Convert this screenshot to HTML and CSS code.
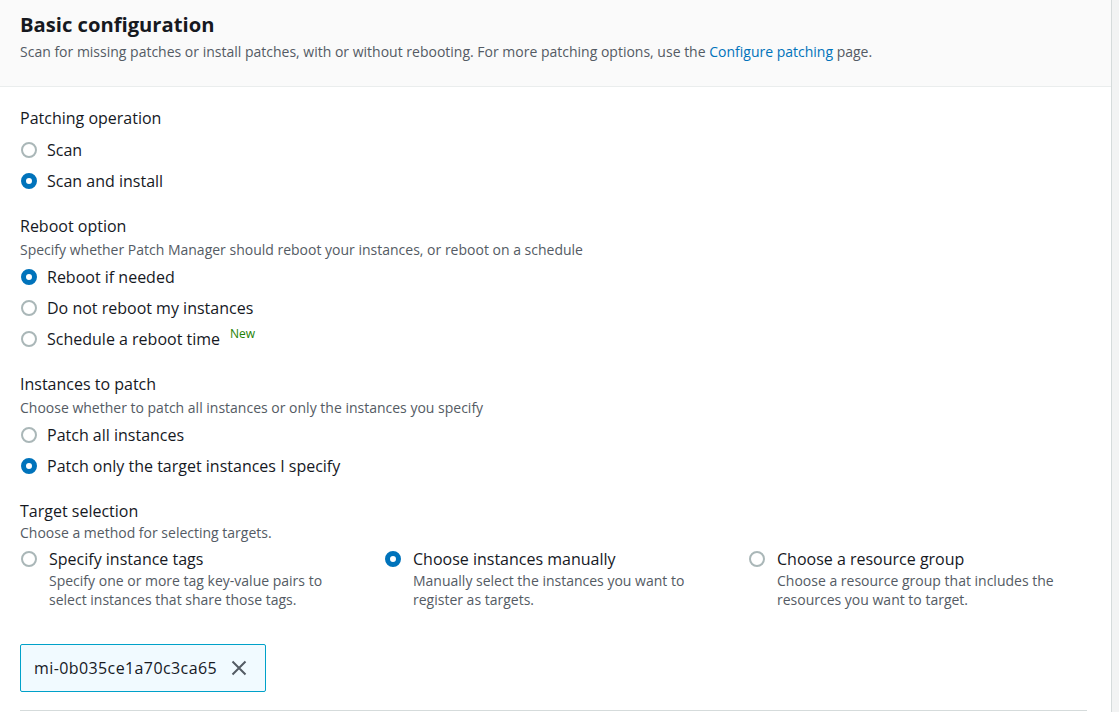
FILE: index.html
```html
<!DOCTYPE html>
<html lang="en">
<head>
<meta charset="utf-8">
<title>Basic configuration</title>
<link rel="stylesheet" href="styles.css">
</head>
<body>
<div class="panel">
  <div class="panel-header">
    <h2 class="title">Basic configuration</h2>
    <p class="header-desc">Scan for missing patches or install patches, with or without rebooting. For more patching options, use the <a class="link" href="#">Configure patching</a> page.</p>
  </div>
  <div class="panel-body">
    <div class="field first">
      <div class="label plain">Patching operation</div>
      <div class="radio-group">
        <label class="radio"><span class="dot"></span><span class="rtext">Scan</span></label>
        <label class="radio"><span class="dot on"></span><span class="rtext">Scan and install</span></label>
      </div>
    </div>

    <div class="field">
      <div class="label">Reboot option</div>
      <div class="desc">Specify whether Patch Manager should reboot your instances, or reboot on a schedule</div>
      <div class="radio-group">
        <label class="radio"><span class="dot on"></span><span class="rtext">Reboot if needed</span></label>
        <label class="radio"><span class="dot"></span><span class="rtext">Do not reboot my instances</span></label>
        <label class="radio"><span class="dot"></span><span class="rtext">Schedule a reboot time</span><span class="badge">New</span></label>
      </div>
    </div>

    <div class="field">
      <div class="label">Instances to patch</div>
      <div class="desc">Choose whether to patch all instances or only the instances you specify</div>
      <div class="radio-group">
        <label class="radio"><span class="dot"></span><span class="rtext">Patch all instances</span></label>
        <label class="radio"><span class="dot on"></span><span class="rtext">Patch only the target instances I specify</span></label>
      </div>
    </div>

    <div class="field">
      <div class="label">Target selection</div>
      <div class="desc tight">Choose a method for selecting targets.</div>
      <div class="tiles">
        <label class="tile">
          <span class="dot"></span>
          <span class="tile-text">
            <span class="tile-label">Specify instance tags</span>
            <span class="tile-desc">Specify one or more tag key-value pairs to select instances that share those tags.</span>
          </span>
        </label>
        <label class="tile">
          <span class="dot on"></span>
          <span class="tile-text">
            <span class="tile-label">Choose instances manually</span>
            <span class="tile-desc">Manually select the instances you want to register as targets.</span>
          </span>
        </label>
        <label class="tile">
          <span class="dot"></span>
          <span class="tile-text">
            <span class="tile-label">Choose a resource group</span>
            <span class="tile-desc">Choose a resource group that includes the resources you want to target.</span>
          </span>
        </label>
      </div>
    </div>

    <div class="token">
      <span class="token-text">mi-0b035ce1a70c3ca65</span>
      <svg class="token-x" width="16" height="16" viewBox="0 0 16 16" aria-hidden="true">
        <path d="M1.5 1.5 L14.5 14.5 M14.5 1.5 L1.5 14.5" stroke="#545b64" stroke-width="2" fill="none"/>
      </svg>
    </div>

    <div class="next-section"></div>
  </div>
</div>
</body>
</html>
```

FILE: styles.css
```css
* { box-sizing: border-box; }

html, body {
  margin: 0;
  padding: 0;
}

body {
  background: #f2f3f3;
  font-family: "Open Sans", "Noto Sans", sans-serif;
  color: #16191f;
  height: 712px;
  overflow: hidden;
}

.panel {
  width: 1112px;
  min-height: 712px;
  background: #ffffff;
  border-right: 1px solid #d5dbdb;
}

.panel-header {
  background: #fafafa;
  border-bottom: 1px solid #eaeded;
  padding: 10px 20px 24px 20px;
  height: 87px;
}

.title {
  margin: 0;
  font-size: 20.2px;
  font-weight: 700;
  line-height: 28px;
  color: #16191f;
}

.header-desc {
  margin: 4px 0 0 0;
  font-size: 14px;
  line-height: 20px;
  color: #545b64;
}

.link {
  color: #0073bb;
  text-decoration: none;
}

.panel-body {
  padding: 20px 20px 0 20px;
}

.field {
  margin-top: 23px;
}

.field.first {
  margin-top: 0;
}

.label {
  font-size: 16px;
  line-height: 22px;
  color: #16191f;
}

.label.plain {
  margin-bottom: 10px;
}

.desc {
  font-size: 14px;
  line-height: 20px;
  color: #545b64;
  margin-top: 3px;
  margin-bottom: 6px;
}

.desc.tight {
  margin-top: 1px;
  margin-bottom: 5px;
}

.radio-group {
  display: flex;
  flex-direction: column;
  gap: 9px;
}

.radio {
  display: flex;
  align-items: center;
  height: 22px;
  font-size: 16px;
  line-height: 22px;
  color: #16191f;
}

.dot {
  flex: none;
  width: 16px;
  height: 16px;
  border-radius: 50%;
  border: 2px solid #aab7b8;
  background: #ffffff;
  margin-left: 1px;
}

.dot.on {
  border: 5px solid #0073bb;
}

.rtext {
  margin-left: 10px;
}

.badge {
  font-size: 12px;
  line-height: 12px;
  color: #1d8102;
  margin-left: 10px;
  position: relative;
  top: -5px;
}

.tiles {
  display: grid;
  grid-template-columns: 344px 344px 344px;
  column-gap: 20px;
}

.tile {
  display: flex;
  align-items: flex-start;
}

.tile .dot {
  margin-top: 3px;
}

.tile-text {
  display: flex;
  flex-direction: column;
  margin-left: 12px;
  max-width: 300px;
}

.tile-label {
  font-size: 16px;
  line-height: 22px;
  color: #16191f;
}

.tile-desc {
  font-size: 14px;
  line-height: 19px;
  color: #545b64;
  margin-top: 1px;
}

.token {
  margin-top: 35px;
  display: inline-flex;
  align-items: center;
  height: 48px;
  width: 246px;
  padding: 0 0 0 13px;
  background: #f1faff;
  border: 1px solid #00a1c9;
  border-radius: 2px;
}

.token-text {
  font-size: 16px;
  line-height: 22px;
  letter-spacing: 0.4px;
  color: #16191f;
}

.token-x {
  margin-left: 14px;
}

.next-section {
  margin-top: 18px;
  width: 1067px;
  border-top: 1px solid #d5dbdb;
  height: 10px;
}
```
